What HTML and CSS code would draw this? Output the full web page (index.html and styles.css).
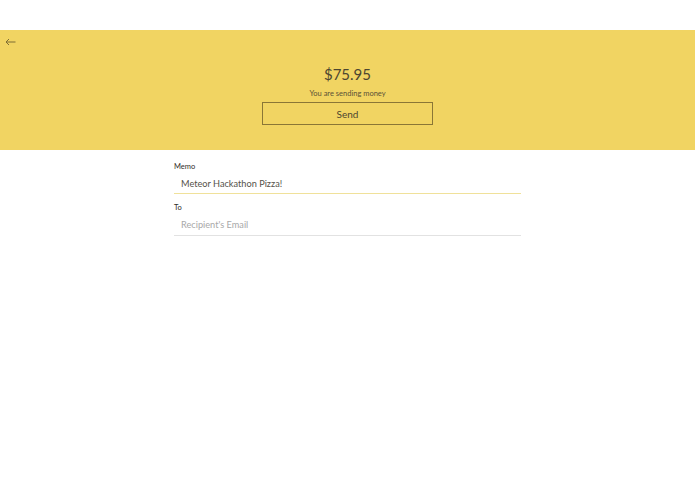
FILE: index.html
```html
<!DOCTYPE html>
<html>
<head>
<meta charset="utf-8">
<link rel="stylesheet" href="styles.css">
</head>
<body>
<div class="topbar"></div>
<header class="hero">
  <a class="back" href="#"><svg width="11" height="8" viewBox="0 0 11 8"><path d="M10.5 4H1M4 1L1 4L4 7" fill="none" stroke="#7d6d34" stroke-width="1"/></svg></a>
  <div class="amount">$75.95</div>
  <div class="subtitle">You are sending money</div>
  <button class="send">Send</button>
</header>
<form class="form">
  <label class="label">Memo</label>
  <input class="field field-active" type="text" value="Meteor Hackathon Pizza!">
  <label class="label label-to">To</label>
  <input class="field field-to" type="text" placeholder="Recipient's Email">
</form>
</body>
</html>
```
FILE: styles.css
```css
html, body {
  margin: 0;
  padding: 0;
  background: #ffffff;
  font-family: Lato, "Open Sans", "Liberation Sans", sans-serif;
  color: #4a4536;
}
.topbar {
  height: 30px;
  background: #ffffff;
}
.hero {
  position: relative;
  height: 120px;
  box-sizing: border-box;
  padding-top: 34px;
  background: #f1d462;
  display: flex;
  flex-direction: column;
  align-items: center;
}
.back {
  position: absolute;
  left: 5px;
  top: 8px;
  display: block;
  line-height: 0;
}
.amount {
  font-size: 15px;
  line-height: 20px;
  color: #4d4630;
}
.subtitle {
  margin-top: 5px;
  font-size: 7.5px;
  line-height: 10px;
  color: #5a5236;
}
.send {
  margin-top: 3px;
  width: 171px;
  height: 23px;
  box-sizing: border-box;
  border: 1.5px solid #8a7636;
  background: transparent;
  font-family: inherit;
  font-size: 10px;
  color: #4d4630;
  padding: 0;
}
.form {
  width: 347px;
  margin: 0 auto;
  padding-top: 12px;
  display: flex;
  flex-direction: column;
}
.label {
  font-size: 7.5px;
  line-height: 10px;
  font-weight: 400;
  color: #2f2d28;
}
.label-to {
  margin-top: 9px;
}
.field {
  margin-top: 0;
  height: 22px;
  box-sizing: border-box;
  border: none;
  border-bottom: 1px solid #e2e2e2;
  padding: 1px 0 0 7px;
  font-family: inherit;
  font-size: 9.2px;
  color: #55524a;
  background: transparent;
  outline: none;
}
.field-active {
  border-bottom: 1px solid #f0e19a;
}
.field-to {
  height: 23px;
}
.field::placeholder {
  color: #a8a8a8;
}
```
